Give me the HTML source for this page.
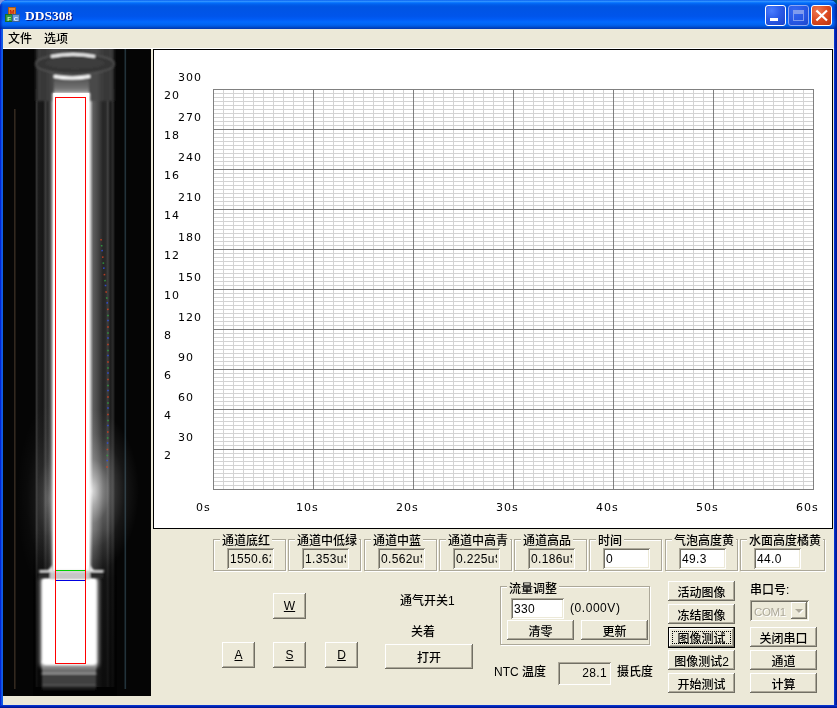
<!DOCTYPE html>
<html lang="zh">
<head>
<meta charset="utf-8">
<title>DDS308</title>
<style>
*{box-sizing:border-box;margin:0;padding:0}
html,body{width:837px;height:708px;overflow:hidden;background:#0a3f5c}
body{position:relative;font-family:"Liberation Sans","Noto Sans CJK SC",sans-serif;font-size:12px;color:#000;font-weight:500}
#win{will-change:transform;position:absolute;left:0;top:0;width:837px;height:708px;background:#0831d9;border-radius:7px 7px 0 0;overflow:hidden}
#frameL{position:absolute;left:0;top:29px;width:3px;height:679px;background:linear-gradient(to right,#0019cf 0,#0831d9 33%,#166aee 66%,#0855dd 100%)}
#frameR{position:absolute;left:834px;top:29px;width:3px;height:679px;background:linear-gradient(to right,#0a3cdc 0,#0024b4 45%,#00138c 100%)}
#frameB{position:absolute;left:0;top:705px;width:837px;height:3px;background:linear-gradient(to bottom,#0a3cdc 0,#0024b4 45%,#00138c 100%)}
#title{position:absolute;left:0;top:0;width:837px;height:29px;border-radius:7px 7px 0 0;
background:linear-gradient(to bottom,#0058ee 0%,#3593ff 4%,#288eff 6%,#127dff 8%,#036ffc 10%,#0262ee 14%,#0057e5 20%,#0054e3 24%,#0055eb 56%,#005bf5 66%,#026afe 76%,#0062ef 86%,#0052d6 92%,#0046c4 95%,#0038ae 100%)}
#title .cap{position:absolute;left:25px;top:8px;font-family:"Liberation Serif","Noto Serif CJK SC",serif;font-weight:bold;font-size:13.5px;line-height:16px;color:#fff;text-shadow:1px 1px 0 #0a1883;letter-spacing:0}
.tb{position:absolute;top:5px;width:21px;height:21px;border:1px solid #fff;border-radius:3px;background:radial-gradient(circle at 30% 25%,#4a7dff 0%,#2b5be8 45%,#1b43c9 100%)}
.tb.max{border-color:#8ea8f2;background:radial-gradient(circle at 30% 25%,#3668f2 0%,#2656e2 60%,#1c46cc 100%)}
.tb.cls{background:radial-gradient(circle at 30% 25%,#ee7a55 0%,#dd4a20 50%,#b9330f 100%)}
#client{position:absolute;left:3px;top:29px;width:831px;height:676px;background:#ece9d8}
#menu{position:absolute;left:0;top:0;width:831px;height:19px;background:#ece9d8}
#menu span{position:absolute;top:3px;line-height:14px;font-size:12px}
#menuline{position:absolute;left:0;top:19px;width:831px;height:1px;background:#fff}
#photo{position:absolute;left:0;top:20px;width:148px;height:647px;background:#050505;overflow:hidden}
#chart{position:absolute;left:150px;top:20px;width:680px;height:480px;background:#fff;border:1px solid #000}
.ax{position:absolute;font-family:"DejaVu Sans","Liberation Sans",sans-serif;font-size:11px;line-height:12px;letter-spacing:1px;color:#000;white-space:pre;margin-top:1px}
#grid{position:absolute;left:59px;top:39px;width:601px;height:401px;background:
repeating-linear-gradient(to right,#808080 0,#808080 1px,transparent 1px,transparent 100px),
repeating-linear-gradient(to bottom,#808080 0,#808080 1px,transparent 1px,transparent 40px),
repeating-linear-gradient(to right,#d3d3d3 0,#d3d3d3 1px,transparent 1px,transparent 10px),
repeating-linear-gradient(to bottom,#d3d3d3 0,#d3d3d3 1px,transparent 1px,transparent 4px)}
#ctl{position:absolute;left:0;top:0;width:0;height:0;font-size:12px;line-height:14px}
#ctl>div{position:absolute;white-space:nowrap}
.grp{border:1px solid #aca899;box-shadow:1px 1px 0 #fff,inset 1px 1px 0 #fff}
.gl{background:#ece9d8;padding:0 2px;line-height:14px}
.ed{background:#fff;box-shadow:inset 1px 1px 0 #aca899,inset -1px -1px 0 #fff,inset 2px 2px 0 #716f64,inset -2px -2px 0 #ece9d8;padding:2px 3px 2px 3px;overflow:hidden}
.ed span{display:block;overflow:hidden;line-height:16px;height:100%;letter-spacing:0.35px;padding-top:1px}
.ls{letter-spacing:0.55px}
.ed.ro{background:#ece9d8}
.ed.ra{text-align:right;padding-right:4px}
.bt.lat{padding-top:0}
.bt{background:#ece9d8;text-align:center;padding-top:2px;box-shadow:inset -1px -1px 0 #716f64,inset 1px 1px 0 #fff,inset -2px -2px 0 #aca899,inset 2px 2px 0 #ece9d8}
.bt.def{box-shadow:inset 0 0 0 1px #000,inset -2px -2px 0 #716f64,inset 2px 2px 0 #fff,inset -3px -3px 0 #aca899}
.bt.def::after{content:"";position:absolute;left:4px;top:4px;right:4px;bottom:4px;border:1px dotted #000}
.combo{background:#ece9d8;box-shadow:inset 1px 1px 0 #aca899,inset -1px -1px 0 #fff,inset 2px 2px 0 #716f64,inset -2px -2px 0 #ece9d8;color:#aca899}
.combo span{position:absolute;left:4px;top:4px;line-height:16px;font-size:11.5px;text-shadow:1px 1px 0 #fff;letter-spacing:-0.4px}
.combo .dd{position:absolute;right:2px;top:2px;width:16px;height:17px;background:#ece9d8;box-shadow:inset -1px -1px 0 #716f64,inset 1px 1px 0 #fff,inset -2px -2px 0 #aca899}
.combo .dd i{position:absolute;left:4px;top:7px;width:0;height:0;border-left:4px solid transparent;border-right:4px solid transparent;border-top:4px solid #aca899;filter:drop-shadow(1px 1px 0 #fff)}
</style>
</head>
<body>
<div style="position:absolute;left:0;top:0;width:7px;height:7px;background:#7b97e0"></div>
<div style="position:absolute;left:830px;top:0;width:7px;height:7px;background:#005068"></div>
<div id="win">
 <div id="title">
  <svg id="appicon" width="16" height="16" viewBox="0 0 16 16" style="position:absolute;left:5px;top:7px">
   <rect x="3.5" y="0.5" width="7" height="7" fill="#e8862e" stroke="#a85a18" stroke-width="1"/>
   <rect x="0.5" y="7.5" width="7" height="7" fill="#2f9a3f" stroke="#1b6a2a" stroke-width="1"/>
   <rect x="7.5" y="7.5" width="7" height="7" fill="#6a9be0" stroke="#3a5f9a" stroke-width="1"/>
   <text x="7" y="6.6" font-size="6" font-weight="bold" font-family="Liberation Sans,sans-serif" text-anchor="middle" fill="#c02010">M</text>
   <text x="4" y="13.6" font-size="6" font-weight="bold" font-family="Liberation Sans,sans-serif" text-anchor="middle" fill="#d8f0c8">F</text>
   <text x="11" y="13.6" font-size="6" font-weight="bold" font-family="Liberation Sans,sans-serif" text-anchor="middle" fill="#e8f0ff">C</text>
  </svg>
  <div class="cap">DDS308</div>
  <div style="position:absolute;right:0;top:4px;width:4px;height:25px;background:linear-gradient(to right,rgba(0,30,150,0),rgba(0,20,120,.75))"></div>
  <div style="position:absolute;left:0;top:4px;width:3px;height:25px;background:linear-gradient(to right,rgba(0,20,170,.7),rgba(0,30,150,0))"></div>
  <div class="tb min" style="left:765px"><svg width="19" height="19" style="position:absolute;left:0;top:0"><rect x="4" y="12" width="8" height="3" fill="#fff"/></svg></div>
  <div class="tb max" style="left:788px"><svg width="19" height="19" style="position:absolute;left:0;top:0"><path d="M4.5 5.5h10v9h-10z M4.5 6.5h10 M4.5 7h10" fill="none" stroke="#7f9bee" stroke-width="1" shape-rendering="crispEdges"/><rect x="4" y="4" width="11" height="3" fill="#7f9bee"/></svg></div>
  <div class="tb cls" style="left:811px"><svg width="19" height="19" style="position:absolute;left:0;top:0"><path d="M5.2 5.2L14.2 13.8M14.2 5.2L5.2 13.8" stroke="#fff" stroke-width="2.2" stroke-linecap="square"/></svg></div>
 </div>
 <div id="frameL"></div><div id="frameR"></div><div id="frameB"></div>
 <div id="client">
  <div id="menu"><span style="left:5px">文件</span><span style="left:41px">选项</span></div>
  <div id="menuline"></div>
  <div id="photo">
<svg width="148" height="647" viewBox="0 0 148 647" style="position:absolute;left:0;top:0">
 <defs>
  <filter id="b1" x="-20%" y="-50%" width="140%" height="200%"><feGaussianBlur stdDeviation="0.8"/></filter>
  <filter id="b2" x="-30%" y="-30%" width="160%" height="160%"><feGaussianBlur stdDeviation="1.3"/></filter>
  <filter id="b3" x="-30%" y="-30%" width="160%" height="160%"><feGaussianBlur stdDeviation="2.2"/></filter>
  <filter id="b4" x="-50%" y="-50%" width="200%" height="200%"><feGaussianBlur stdDeviation="4"/></filter>
  <linearGradient id="tube" gradientUnits="userSpaceOnUse" x1="32" y1="0" x2="112" y2="0">
   <stop offset="0" stop-color="#080808"/>
   <stop offset="0.02" stop-color="#343434"/>
   <stop offset="0.045" stop-color="#1a1a1a"/>
   <stop offset="0.10" stop-color="#161616"/>
   <stop offset="0.13" stop-color="#3a3a3a"/>
   <stop offset="0.16" stop-color="#2a2a2a"/>
   <stop offset="0.19" stop-color="#484848"/>
   <stop offset="0.235" stop-color="#8a8a8a"/>
   <stop offset="0.69" stop-color="#b0b0b0"/>
   <stop offset="0.73" stop-color="#5c5c5c"/>
   <stop offset="0.79" stop-color="#444444"/>
   <stop offset="0.85" stop-color="#262626"/>
   <stop offset="0.885" stop-color="#2a2a2a"/>
   <stop offset="0.91" stop-color="#404040"/>
   <stop offset="0.94" stop-color="#1c1c1c"/>
   <stop offset="0.975" stop-color="#2c2c2c"/>
   <stop offset="1" stop-color="#080808"/>
  </linearGradient>
  <linearGradient id="fadeLow" x1="0" y1="0" x2="0" y2="1">
   <stop offset="0" stop-color="#000" stop-opacity="0"/>
   <stop offset="0.3" stop-color="#000" stop-opacity="0.55"/>
   <stop offset="1" stop-color="#000" stop-opacity="0.7"/>
  </linearGradient>
  <linearGradient id="capg" x1="0" y1="0" x2="1" y2="0">
   <stop offset="0" stop-color="#0c0c0c"/>
   <stop offset="0.04" stop-color="#3c3c3c"/>
   <stop offset="0.12" stop-color="#363636"/>
   <stop offset="0.24" stop-color="#4a4a4a"/>
   <stop offset="0.5" stop-color="#404040"/>
   <stop offset="0.76" stop-color="#4a4a4a"/>
   <stop offset="0.88" stop-color="#363636"/>
   <stop offset="0.96" stop-color="#3c3c3c"/>
   <stop offset="1" stop-color="#0c0c0c"/>
  </linearGradient>
  <linearGradient id="neck" x1="0" y1="0" x2="0" y2="1">
   <stop offset="0" stop-color="#505050"/>
   <stop offset="0.6" stop-color="#707070"/>
   <stop offset="1" stop-color="#b0b0b0"/>
  </linearGradient>
  <radialGradient id="glowR" cx="0.5" cy="0.5" r="0.5">
   <stop offset="0" stop-color="#fff" stop-opacity="0.8"/>
   <stop offset="0.18" stop-color="#fff" stop-opacity="0.5"/>
   <stop offset="0.4" stop-color="#fff" stop-opacity="0.22"/>
   <stop offset="0.7" stop-color="#fff" stop-opacity="0.07"/>
   <stop offset="1" stop-color="#fff" stop-opacity="0"/>
  </radialGradient>
  <linearGradient id="botg" x1="0" y1="0" x2="0" y2="1">
   <stop offset="0" stop-color="#e0e0e0"/>
   <stop offset="0.35" stop-color="#a0a0a0"/>
   <stop offset="0.6" stop-color="#7a7a7a"/>
   <stop offset="1" stop-color="#585858"/>
  </linearGradient>
 </defs>
 <rect width="148" height="647" fill="#050505"/>
 <!-- far faint reflections -->
 <rect x="11" y="60" width="1.6" height="580" fill="#32281f"/>
 <rect x="121.5" y="0" width="1.6" height="640" fill="#22323a"/>
 <!-- tube body -->
 <rect x="32" y="40" width="80" height="598" fill="url(#tube)"/>
 <rect x="30" y="480" width="84" height="167" fill="url(#fadeLow)"/>
 <!-- cap -->
 <g filter="url(#b1)">
  <rect x="32" y="-2" width="80" height="54" fill="url(#capg)"/>
  <ellipse cx="72" cy="15" rx="39.5" ry="10" fill="#343434" stroke="#5a5a5a" stroke-width="1.2"/>
  <ellipse cx="72" cy="14" rx="30" ry="6" fill="#3c3c3c"/>
  <rect x="51" y="28" width="35" height="18" fill="url(#neck)"/>
  <path d="M49 7.4 Q70 3.4 91 7.4" stroke="#f4f4f4" stroke-width="2.6" fill="none" stroke-linecap="round"/>
  <path d="M52 27.5 Q69 30.5 86 27.5" stroke="#fff" stroke-width="3" fill="none" stroke-linecap="round"/>
 </g>
 <!-- glows -->
 <ellipse cx="88" cy="442" rx="48" ry="82" fill="url(#glowR)"/>
 <ellipse cx="46" cy="450" rx="32" ry="95" fill="url(#glowR)" opacity="0.3"/>
 <!-- specks -->
 <g fill="none" stroke-width="1.6" opacity="0.85">
  <path d="M98 190 L105 262 L105 375 L104 420" stroke="#d04020" stroke-dasharray="1.5 16"/>
  <path d="M98 190 L105 262 L105 375 L104 420" stroke="#30a040" stroke-dasharray="1.5 16" stroke-dashoffset="-6"/>
  <path d="M98 190 L105 262 L105 375 L104 420" stroke="#3050e0" stroke-dasharray="1.5 16" stroke-dashoffset="-11"/>
 </g>
 <!-- column -->
 <rect x="49.3" y="44" width="37.9" height="478" fill="#fff" filter="url(#b1)" opacity="0.85"/>
 <rect x="50.3" y="44" width="35.9" height="478" fill="#fff"/>
 <!-- lower water -->
 <rect x="37" y="527" width="58.5" height="92" rx="5" fill="#fff" filter="url(#b3)" opacity="0.7"/>
 <g filter="url(#b1)">
  <rect x="39" y="612" width="54" height="13" fill="url(#botg)"/>
  <rect x="39" y="625" width="54" height="12" fill="#404040"/>
  <rect x="39" y="637" width="54" height="3.5" fill="#222"/>
  <rect x="38.5" y="623.8" width="55" height="1.5" fill="#a4a4a4"/>
  <rect x="39" y="635.6" width="54" height="1.2" fill="#5c5c5c"/>
 </g>
 <rect x="39" y="529" width="54.5" height="87" rx="4" fill="#fff" filter="url(#b1)"/>
 <!-- meniscus -->
 <g filter="url(#b1)">
  <rect x="36" y="522.5" width="64" height="6.5" fill="#2a2a2a"/>
  <rect x="47" y="522" width="40" height="8" fill="#c6c6c6"/>
  <rect x="36" y="521" width="65" height="2" rx="1" fill="#e6e6e6"/>
  <path d="M44 522 L50 516 L50 522 Z M92 522 L86 516 L86 522 Z" fill="#e6e6e6"/>
 </g>
 <!-- overlay -->
 <rect x="52.5" y="48.5" width="30" height="566" fill="none" stroke="#f00" stroke-width="1" shape-rendering="crispEdges"/>
 <rect x="53" y="521" width="29" height="1" fill="#00d000" shape-rendering="crispEdges"/>
 <rect x="53" y="531" width="29" height="1" fill="#0000e0" shape-rendering="crispEdges"/>
</svg>
  </div>
  <div id="chart">
   <div id="grid"></div>
   <div class="ax" style="left:24px;top:21px">300</div>
   <div class="ax" style="left:24px;top:61px">270</div>
   <div class="ax" style="left:24px;top:101px">240</div>
   <div class="ax" style="left:24px;top:141px">210</div>
   <div class="ax" style="left:24px;top:181px">180</div>
   <div class="ax" style="left:24px;top:221px">150</div>
   <div class="ax" style="left:24px;top:261px">120</div>
   <div class="ax" style="left:24px;top:301px">90</div>
   <div class="ax" style="left:24px;top:341px">60</div>
   <div class="ax" style="left:24px;top:381px">30</div>
   <div class="ax" style="left:10px;top:39px">20</div>
   <div class="ax" style="left:10px;top:79px">18</div>
   <div class="ax" style="left:10px;top:119px">16</div>
   <div class="ax" style="left:10px;top:159px">14</div>
   <div class="ax" style="left:10px;top:199px">12</div>
   <div class="ax" style="left:10px;top:239px">10</div>
   <div class="ax" style="left:10px;top:279px">8</div>
   <div class="ax" style="left:10px;top:319px">6</div>
   <div class="ax" style="left:10px;top:359px">4</div>
   <div class="ax" style="left:10px;top:399px">2</div>
   <div class="ax" style="left:42px;top:451px">0s</div>
   <div class="ax" style="left:142px;top:451px">10s</div>
   <div class="ax" style="left:242px;top:451px">20s</div>
   <div class="ax" style="left:342px;top:451px">30s</div>
   <div class="ax" style="left:442px;top:451px">40s</div>
   <div class="ax" style="left:542px;top:451px">50s</div>
   <div class="ax" style="left:642px;top:451px">60s</div>
  </div>
  <div id="ctl">
   <div class="grp" style="left:210px;top:510px;width:73px;height:32px"></div>
   <div class="gl" style="left:217px;top:505px">通道底红</div>
   <div class="ed ro" style="left:224px;top:519px;width:47px;height:21px"><span>1550.62</span></div>
   <div class="grp" style="left:285px;top:510px;width:73px;height:32px"></div>
   <div class="gl" style="left:292px;top:505px">通道中低绿</div>
   <div class="ed ro" style="left:299px;top:519px;width:47px;height:21px"><span>1.353uS</span></div>
   <div class="grp" style="left:361px;top:510px;width:73px;height:32px"></div>
   <div class="gl" style="left:368px;top:505px">通道中蓝</div>
   <div class="ed ro" style="left:375px;top:519px;width:47px;height:21px"><span>0.562uS</span></div>
   <div class="grp" style="left:436px;top:510px;width:73px;height:32px"></div>
   <div class="gl" style="left:443px;top:505px">通道中高青</div>
   <div class="ed ro" style="left:450px;top:519px;width:47px;height:21px"><span>0.225uS</span></div>
   <div class="grp" style="left:511px;top:510px;width:73px;height:32px"></div>
   <div class="gl" style="left:518px;top:505px">通道高品</div>
   <div class="ed ro" style="left:525px;top:519px;width:47px;height:21px"><span>0.186uS</span></div>
   <div class="grp" style="left:586px;top:510px;width:73px;height:32px"></div>
   <div class="gl" style="left:593px;top:505px">时间</div>
   <div class="ed " style="left:600px;top:519px;width:47px;height:21px"><span>0</span></div>
   <div class="grp" style="left:662px;top:510px;width:73px;height:32px"></div>
   <div class="gl" style="left:669px;top:505px">气泡高度黄</div>
   <div class="ed " style="left:676px;top:519px;width:47px;height:21px"><span>49.3</span></div>
   <div class="grp" style="left:737px;top:510px;width:85px;height:32px"></div>
   <div class="gl" style="left:744px;top:505px">水面高度橘黄</div>
   <div class="ed " style="left:751px;top:519px;width:47px;height:21px"><span>44.0</span></div>
   <div class="bt lat" style="left:270px;top:564px;width:33px;height:26px;line-height:26px"><u>W</u></div>
   <div class="bt lat" style="left:219px;top:613px;width:33px;height:26px;line-height:26px"><u>A</u></div>
   <div class="bt lat" style="left:270px;top:613px;width:33px;height:26px;line-height:26px"><u>S</u></div>
   <div class="bt lat" style="left:322px;top:613px;width:33px;height:26px;line-height:26px"><u>D</u></div>
   <div class="lb " style="left:397px;top:565px">通气开关1</div>
   <div class="lb " style="left:408px;top:596px">关着</div>
   <div class="bt " style="left:382px;top:615px;width:88px;height:25px;line-height:25px">打开</div>
   <div class="grp" style="left:497px;top:557px;width:150px;height:59px"></div>
   <div class="gl" style="left:504px;top:553px">流量调整</div>
   <div class="ed " style="left:508px;top:569px;width:53px;height:21px"><span>330</span></div>
   <div class="lb ls" style="left:567px;top:572px">(0.000V)</div>
   <div class="bt " style="left:504px;top:591px;width:67px;height:20px;line-height:20px">清零</div>
   <div class="bt " style="left:578px;top:591px;width:67px;height:20px;line-height:20px">更新</div>
   <div class="lb " style="left:491px;top:636px">NTC 温度</div>
   <div class="ed ro ra" style="left:555px;top:633px;width:53px;height:23px"><span>28.1</span></div>
   <div class="lb " style="left:614px;top:636px">摄氏度</div>
   <div class="bt " style="left:665px;top:552px;width:67px;height:20px;line-height:20px">活动图像</div>
   <div class="bt " style="left:665px;top:575px;width:67px;height:20px;line-height:20px">冻结图像</div>
   <div class="bt def" style="left:665px;top:598px;width:67px;height:21px;line-height:21px">图像测试</div>
   <div class="bt " style="left:665px;top:621px;width:67px;height:20px;line-height:20px">图像测试2</div>
   <div class="bt " style="left:665px;top:644px;width:67px;height:20px;line-height:20px">开始测试</div>
   <div class="lb " style="left:747px;top:554px">串口号:</div>
   <div class="combo" style="left:747px;top:571px;width:59px;height:21px"><span>COM1</span><div class="dd"><i></i></div></div>
   <div class="bt " style="left:747px;top:598px;width:67px;height:20px;line-height:20px">关闭串口</div>
   <div class="bt " style="left:747px;top:621px;width:67px;height:20px;line-height:20px">通道</div>
   <div class="bt " style="left:747px;top:644px;width:67px;height:20px;line-height:20px">计算</div>
  </div>
 </div>
</div>
</body>
</html>
